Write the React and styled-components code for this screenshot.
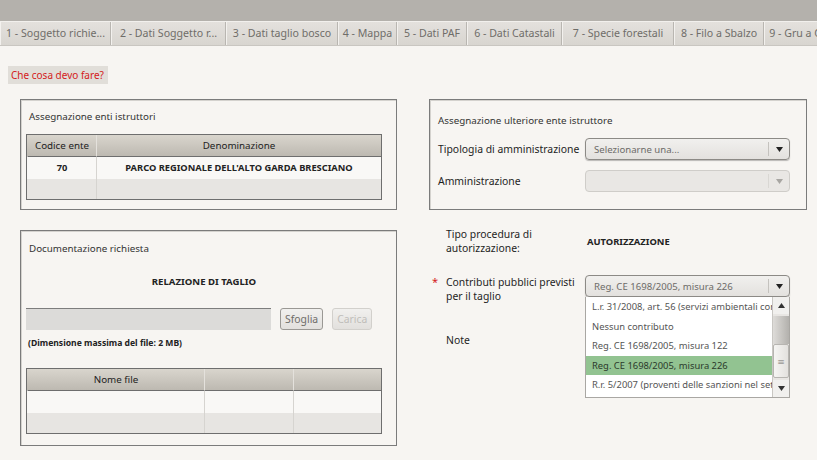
import React from "react";
import styled, { createGlobalStyle } from "styled-components";

const GlobalStyle = createGlobalStyle`
  body {
    margin: 0;
    background: #f7f5f2;
    font-family: "Noto Sans", "DejaVu Sans", sans-serif;
    color: #333;
  }
`;

const tabs = [
  { label: "1 - Soggetto richie...", width: 111 },
  { label: "2 - Dati Soggetto r...", width: 115 },
  { label: "3 - Dati taglio bosco", width: 112 },
  { label: "4 - Mappa", width: 59 },
  { label: "5 - Dati PAF", width: 70 },
  { label: "6 - Dati Catastali", width: 95 },
  { label: "7 - Specie forestali", width: 112 },
  { label: "8 - Filo a Sbalzo", width: 90 },
  { label: "9 - Gru a Cavo", width: 80 },
];

const options = [
  "L.r. 31/2008, art. 56 (servizi ambientali con",
  "Nessun contributo",
  "Reg. CE 1698/2005, misura 122",
  "Reg. CE 1698/2005, misura 226",
  "R.r. 5/2007 (proventi delle sanzioni nel settore",
];

const Page = styled.div`
  width: 817px;
  height: 460px;
  overflow: hidden;
`;

const TopBar = styled.div`
  height: 21px;
  background: #b4b1ac;
  border-bottom: 1px solid #f2f0ed;
`;

const TabStrip = styled.div`
  display: flex;
  height: 23px;
  background: #b4b1ac;
  border-bottom: 1px solid #c9c6c1;
  overflow: hidden;
`;

const Tab = styled.div`
  flex: 0 0 ${(p) => p.$w}px;
  box-sizing: border-box;
  background: linear-gradient(#e4e1dd, #d8d5d0);
  border-left: 1px solid #f3f1ee;
  border-right: 1px solid #b9b6b1;
  color: #6f6d69;
  font-size: 10.6px;
  line-height: 23px;
  text-align: center;
  white-space: nowrap;
  overflow: hidden;
`;

const Content = styled.div`
  display: flex;
  flex-direction: column;
  align-items: flex-start;
  padding: 20px 0 0 8px;
`;

const HelpLink = styled.div`
  background: #e1ded9;
  color: #d42020;
  font-size: 10px;
  line-height: 18px;
  padding: 0 4px 0 3px;
`;

const Grid = styled.div`
  display: grid;
  grid-template-columns: 377px 378px;
  column-gap: 32px;
  row-gap: 20px;
  margin: 15px 0 0 12px;
`;

const Panel = styled.div`
  box-sizing: border-box;
  border: 1px solid #7b7b7b;
  box-shadow: inset 1px 1px 0 #d4d2ce;
  padding: ${(p) => p.$pad};
`;

const PanelTitle = styled.div`
  font-size: 9.8px;
  line-height: 14px;
  color: #333;
  padding-left: ${(p) => p.$indent || 3}px;
  margin-bottom: ${(p) => p.$gap}px;
`;

const Table = styled.div`
  display: grid;
  grid-template-columns: ${(p) => p.$cols};
  border: 1px solid #6e6e6e;
  font-size: 9.8px;
`;

const HeadCell = styled.div`
  height: 21px;
  line-height: 21px;
  text-align: center;
  color: #222;
  background: linear-gradient(#d9d5cd, #bdb9b1);
  border-left: 1px solid ${(p) => (p.$first ? "transparent" : "#e4e1dc")};
  border-bottom: 1px solid #6e6e6e;
`;

const Cell = styled.div`
  height: ${(p) => (p.$alt ? 20 : 22)}px;
  line-height: 22px;
  text-align: center;
  background: ${(p) => (p.$alt ? "#e7e5e2" : "#f9f8f6")};
  border-left: 1px solid ${(p) => (p.$first ? "transparent" : "#d6d4d0")};
  color: #222;
  font-weight: ${(p) => (p.$bold ? 700 : 400)};
  font-size: ${(p) => (p.$bold ? "9.3px" : "9.8px")};
`;

const FieldRow = styled.div`
  display: grid;
  grid-template-columns: 147px 205px;
  align-items: center;
  padding-left: 8px;
  margin-top: ${(p) => p.$mt || 0}px;
`;

const Label = styled.div`
  font-size: 10.4px;
  line-height: 14px;
  color: #1e1e1e;
`;

const SelectBox = styled.div`
  position: relative;
  box-sizing: border-box;
  height: 22px;
  border: 1px solid ${(p) => (p.$disabled ? "#cfcdc9" : "#8c8a86")};
  border-radius: 4px;
  background: ${(p) =>
    p.$disabled ? "#e9e7e4" : "linear-gradient(#f1f0ee, #e3e1de)"};
  box-shadow: ${(p) => (p.$disabled ? "none" : "0 1px 1px rgba(0,0,0,0.25)")};
  display: flex;
  align-items: center;
`;

const SelectText = styled.div`
  flex: 1;
  padding-left: 8px;
  font-size: 9.6px;
  color: #6d6b68;
  white-space: nowrap;
  overflow: hidden;
`;

const SelectArrow = styled.div`
  width: 20px;
  height: 14px;
  border-left: 1px solid ${(p) => (p.$disabled ? "#d9d7d3" : "#c4c2be")};
  display: flex;
  align-items: center;
  justify-content: center;
  svg {
    fill: ${(p) => (p.$disabled ? "#a8a6a2" : "#222")};
  }
`;

const Center = styled.div`
  text-align: center;
  font-size: 9.6px;
  font-weight: 700;
  color: #222;
  line-height: 14px;
  margin-bottom: ${(p) => p.$gap}px;
`;

const UploadRow = styled.div`
  display: flex;
  align-items: center;
  gap: 9px;
`;

const FileInput = styled.div`
  width: 245px;
  height: 21px;
  background: #dcdbd9;
  border-top: 1px solid #7d7d7d;
`;

const Button = styled.div`
  box-sizing: border-box;
  height: 22px;
  padding: 0 4px;
  border: 1px solid ${(p) => (p.$disabled ? "#d2d0cc" : "#9a9894")};
  border-radius: 3px;
  background: linear-gradient(#f1f0ee, #e2e0dd);
  color: ${(p) => (p.$disabled ? "#c0beba" : "#6f6d69")};
  font-size: 10.4px;
  line-height: 20px;
`;

const Hint = styled.div`
  font-size: 8.6px;
  font-weight: 700;
  color: #222;
  line-height: 12px;
  margin: 7px 0 19px 2px;
`;

const RightColumn = styled.div`
  display: flex;
  flex-direction: column;
`;

const FormRow = styled.div`
  display: grid;
  grid-template-columns: 17px 139px 205px;
  align-items: ${(p) => p.$align || "center"};
  margin-top: ${(p) => p.$mt || 0}px;
`;

const Required = styled.span`
  color: #d42020;
  font-size: 11px;
  line-height: 14px;
  padding-left: 3px;
`;

const Value = styled.div`
  font-size: 9.4px;
  font-weight: 700;
  color: #222;
  padding-left: 2px;
`;

const DropList = styled.div`
  position: absolute;
  left: -1px;
  top: 21px;
  width: 205px;
  height: 101px;
  box-sizing: border-box;
  background: #fff;
  border: 1px solid #a9a7a3;
  border-top: none;
  display: flex;
  z-index: 2;
`;

const OptionList = styled.div`
  flex: 1;
  overflow: hidden;
`;

const Option = styled.div`
  height: 19.6px;
  line-height: 19.6px;
  padding-left: 6px;
  font-size: 9.4px;
  white-space: nowrap;
  overflow: hidden;
  background: ${(p) => (p.$active ? "#92c391" : "#fff")};
  color: ${(p) => (p.$active ? "#2b3a2b" : "#555")};
`;

const ScrollBar = styled.div`
  width: 16px;
  border-left: 1px solid #c9c7c3;
  background: #e8e6e3;
  display: flex;
  flex-direction: column;
`;

const ScrollBtn = styled.div`
  height: 17px;
  display: flex;
  align-items: center;
  justify-content: center;
  background: #f1f0ee;
  svg {
    fill: #333;
  }
`;

const ScrollTrack = styled.div`
  flex: 1;
  display: flex;
  flex-direction: column;
  padding: 2px 0;
`;

const ScrollUpper = styled.div`
  height: 28px;
  background: linear-gradient(90deg, #dedcd9, #b3b1ad);
`;

const ScrollThumb = styled.div`
  margin-top: auto;
  height: 34px;
  box-sizing: border-box;
  border: 1px solid #b7b5b1;
  border-radius: 2px;
  background: linear-gradient(90deg, #f6f5f3, #e3e1de);
  display: flex;
  align-items: center;
  justify-content: center;
  color: #9a9894;
  font-size: 9px;
`;

const Arrow = ({ up, size = 7 }) => (
  <svg width={size} height={size - 2} viewBox="0 0 7 5">
    {up ? <path d="M0 5 L3.5 0 L7 5 Z" /> : <path d="M0 0 L7 0 L3.5 5 Z" />}
  </svg>
);

const Select = ({ text, disabled, children }) => (
  <SelectBox $disabled={disabled}>
    <SelectText>{text}</SelectText>
    <SelectArrow $disabled={disabled}>
      <Arrow />
    </SelectArrow>
    {children}
  </SelectBox>
);

export default function App() {
  return (
    <Page>
      <GlobalStyle />
      <TopBar />
      <TabStrip>
        {tabs.map((t) => (
          <Tab key={t.label} $w={t.width}>
            {t.label}
          </Tab>
        ))}
      </TabStrip>
      <Content>
        <HelpLink>Che cosa devo fare?</HelpLink>
        <Grid>
          <Panel $pad="10px 14px 9px 5px">
            <PanelTitle $gap={10}>Assegnazione enti istruttori</PanelTitle>
            <Table $cols="69px 1fr">
              <HeadCell $first>Codice ente</HeadCell>
              <HeadCell>Denominazione</HeadCell>
              <Cell $first $bold>
                70
              </Cell>
              <Cell $bold>PARCO REGIONALE DELL'ALTO GARDA BRESCIANO</Cell>
              <Cell $first $alt />
              <Cell $alt />
            </Table>
          </Panel>

          <Panel $pad="14px 0 16px 0">
            <PanelTitle $indent={8} $gap={10}>
              Assegnazione ulteriore ente istruttore
            </PanelTitle>
            <FieldRow>
              <Label>Tipologia di amministrazione</Label>
              <Select text="Selezionarne una..." />
            </FieldRow>
            <FieldRow $mt={10}>
              <Label>Amministrazione</Label>
              <Select text="" disabled />
            </FieldRow>
          </Panel>

          <Panel $pad="11px 14px 11px 5px">
            <PanelTitle $gap={19}>Documentazione richiesta</PanelTitle>
            <Center $gap={19}>RELAZIONE DI TAGLIO</Center>
            <UploadRow>
              <FileInput />
              <Button>Sfoglia</Button>
              <Button $disabled>Carica</Button>
            </UploadRow>
            <Hint>(Dimensione massima del file: 2 MB)</Hint>
            <Table $cols="177px 89px 1fr">
              <HeadCell $first>Nome file</HeadCell>
              <HeadCell />
              <HeadCell />
              <Cell $first />
              <Cell />
              <Cell />
              <Cell $first $alt />
              <Cell $alt />
              <Cell $alt />
            </Table>
          </Panel>

          <RightColumn>
            <FormRow $mt={-3}>
              <span />
              <Label>
                Tipo procedura di
                <br />
                autorizzazione:
              </Label>
              <Value>AUTORIZZAZIONE</Value>
            </FormRow>
            <FormRow $mt={20} $align="start">
              <Required>*</Required>
              <Label>
                Contributi pubblici previsti
                <br />
                per il taglio
              </Label>
              <Select text="Reg. CE 1698/2005, misura 226">
                <DropList>
                  <OptionList>
                    {options.map((o, i) => (
                      <Option key={o} $active={i === 3}>
                        {o}
                      </Option>
                    ))}
                  </OptionList>
                  <ScrollBar>
                    <ScrollBtn>
                      <Arrow up size={7} />
                    </ScrollBtn>
                    <ScrollTrack>
                      <ScrollUpper />
                      <ScrollThumb>≡</ScrollThumb>
                    </ScrollTrack>
                    <ScrollBtn>
                      <Arrow size={7} />
                    </ScrollBtn>
                  </ScrollBar>
                </DropList>
              </Select>
            </FormRow>
            <FormRow $mt={30}>
              <span />
              <Label>Note</Label>
              <span />
            </FormRow>
          </RightColumn>
        </Grid>
      </Content>
    </Page>
  );
}
